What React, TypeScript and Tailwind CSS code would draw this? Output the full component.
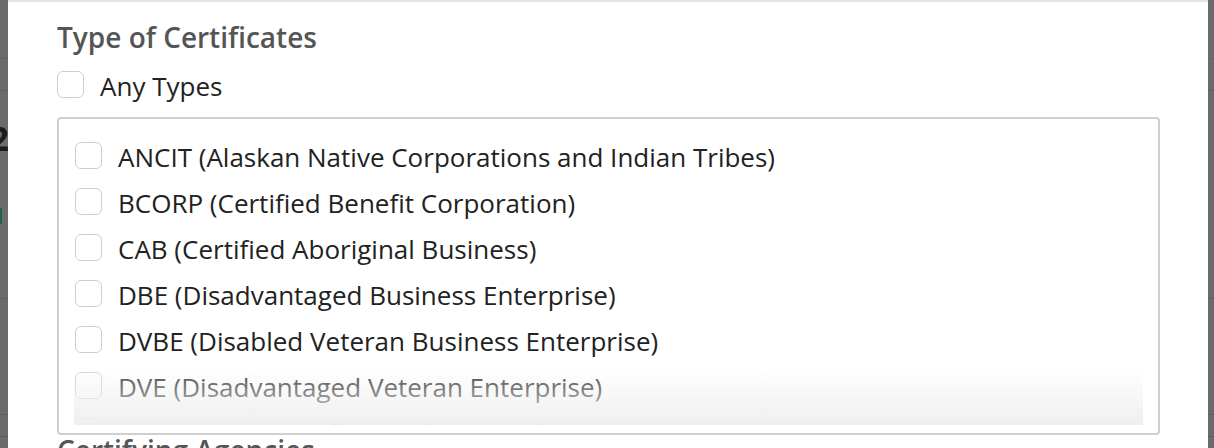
import React from "react";

const items = [
  "ANCIT (Alaskan Native Corporations and Indian Tribes)",
  "BCORP (Certified Benefit Corporation)",
  "CAB (Certified Aboriginal Business)",
  "DBE (Disadvantaged Business Enterprise)",
  "DVBE (Disabled Veteran Business Enterprise)",
  "DVE (Disadvantaged Veteran Enterprise)",
  "EDGE (Economically Disadvantaged Group Enterprise)",
];

function Box() {
  return (
    <span className="block w-[27px] h-[27px] shrink-0 rounded-[6px] border border-[#cfcfcf] bg-white" />
  );
}

function Line({ c = "bg-[#606060]" }: { c?: string }) {
  return <div className={`h-px shrink-0 ${c}`} />;
}

function LeftStrip() {
  return (
    <div className="flex w-[8px] shrink-0 flex-col overflow-hidden bg-[#6b6b6b]">
      <div className="h-[58px] shrink-0" />
      <Line c="bg-[#636363]" />
      <div className="h-[31px] shrink-0" />
      <Line c="bg-[#5f5f5f]" />
      <div className="h-[27px] shrink-0" />
      <div className="flex h-[40px] shrink-0 justify-end overflow-hidden">
        <span className="text-[34px] leading-[40px] font-bold text-[#1c1c1c] -mr-[1px]">2</span>
      </div>
      <div className="h-[50px] shrink-0" />
      <div className="flex h-[16px] shrink-0">
        <div className="w-[2px] bg-[#255f52]" />
        <div className="flex flex-1 items-center">
          <div className="h-px w-full bg-[#4f7a70]" />
        </div>
      </div>
      <div className="h-[74px] shrink-0" />
      <Line />
      <div className="h-[115px] shrink-0" />
      <Line />
      <div className="h-[21px] shrink-0" />
      <Line c="bg-[#5d5d5d]" />
    </div>
  );
}

function RightStrip() {
  return (
    <div className="flex w-[6px] shrink-0 flex-col overflow-hidden bg-[#6b6b6b]">
      <div className="h-[58px] shrink-0" />
      <Line c="bg-[#636363]" />
      <div className="h-[31px] shrink-0" />
      <Line c="bg-[#5f5f5f]" />
      <div className="h-[207px] shrink-0" />
      <Line />
      <div className="h-[115px] shrink-0" />
      <Line />
      <div className="h-[21px] shrink-0" />
      <Line c="bg-[#5d5d5d]" />
    </div>
  );
}

export default function App() {
  return (
    <div
      className="flex w-[1214px] h-[448px] overflow-hidden bg-[#6b6b6b]"
      style={{ fontFamily: '"Open Sans", "Noto Sans", sans-serif' }}
    >
      <LeftStrip />

      {/* modal */}
      <div className="flex flex-1 flex-col overflow-hidden bg-white">
        <div className="h-[2px] shrink-0 bg-[#e5e5e5]" />
        <div className="flex flex-col pl-[49px] pr-[48px] pt-[17px]">
          <div className="text-[28px] leading-[36px] font-semibold text-[#555555]">
            Type of Certificates
          </div>
          <label className="mt-[15px] flex h-[28px] items-center gap-[16px]">
            <Box />
            <span className="pt-[3px] text-[26px] leading-[28px] text-[#222222]">Any Types</span>
          </label>
          <div className="mt-[19px] flex h-[318px] shrink-0 flex-col rounded-[4px] border-2 border-[#cfcfcf] px-[15px] pb-[8px]">
            <div className="relative flex-1 overflow-hidden">
              <div className="flex flex-col pl-[1px] pt-[13px]">
                {items.map((t) => (
                  <label key={t} className="flex h-[46px] shrink-0 items-center gap-[16px]">
                    <Box />
                    <span className="whitespace-nowrap pt-[3px] text-[26px] leading-[28px] text-[#222222]">
                      {t}
                    </span>
                  </label>
                ))}
              </div>
              <div className="absolute inset-x-0 bottom-0 h-[57px] bg-linear-to-b from-[rgba(255,255,255,0.15)] to-[rgba(238,238,238,0.95)]" />
            </div>
          </div>
          <div className="mt-[1px] text-[28px] leading-[28px] font-semibold text-[#555555]">
            Certifying Agencies
          </div>
        </div>
      </div>

      <RightStrip />
    </div>
  );
}
